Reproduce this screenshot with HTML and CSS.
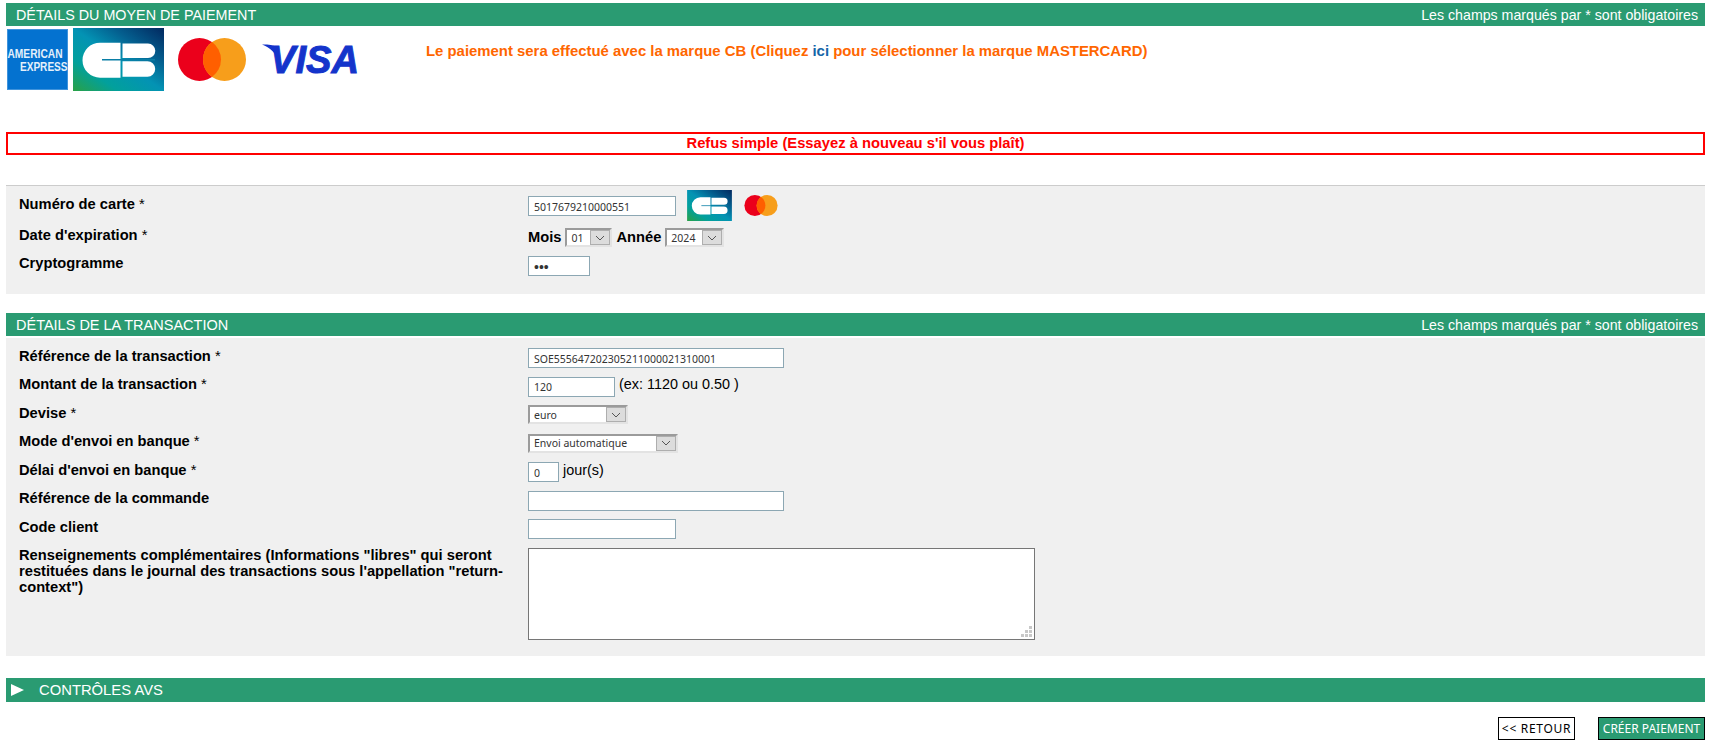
FILE: index.html
```html
<!DOCTYPE html>
<html lang="fr">
<head>
<meta charset="utf-8">
<title>Détails du moyen de paiement</title>
<link rel="stylesheet" href="styles.css">
</head>
<body>
<form class="page">
  <div class="bar"><span>DÉTAILS DU MOYEN DE PAIEMENT</span><span class="bar-note">Les champs marqués par * sont obligatoires</span></div>
  <div class="brands">
    <svg class="logo-amex" viewBox="0 0 61 61" aria-label="American Express">
      <rect x=".5" y=".5" width="60" height="60" fill="#0472d0" stroke="#3f93dc"/>
      <text x=".5" y="29.3" class="amex-text" textLength="55" lengthAdjust="spacingAndGlyphs">AMERICAN</text>
      <text x="13" y="41.700" class="amex-text" textLength="47.500" lengthAdjust="spacingAndGlyphs">EXPRESS</text>
    </svg>
    <svg class="logo-cb" viewBox="0 0 91 63" aria-label="CB">
      <defs>
        <linearGradient id="cbg" x1="1" y1="0" x2="0" y2="1">
          <stop offset="0" stop-color="#02285f"/>
          <stop offset="0.28" stop-color="#045f8f"/>
          <stop offset="0.5" stop-color="#0393b4"/>
          <stop offset="0.75" stop-color="#02a09c"/>
          <stop offset="1" stop-color="#2aa145"/>
        </linearGradient>
      </defs>
      <rect width="91" height="63" fill="url(#cbg)"/>
      <path d="M47.500 14.700H27a17.500 17.500 0 0 0 0 35H47.500Z" fill="#fff"/>
      <path d="M49.500 15.500H75a7.300 7.300 0 0 1 0 14.600H49.500ZM49.500 33.300H74.500a7.700 7.700 0 0 1 0 15.400H49.500Z" fill="#fff"/>
      <path d="M29 31.800H82" stroke="#0a7ea6" stroke-width="1.6"/>
    </svg>
    <svg class="logo-mc" viewBox="0 0 68 43" aria-label="Mastercard">
      <circle cx="21.5" cy="21.5" r="21.5" fill="#eb001b"/>
      <circle cx="46.5" cy="21.5" r="21.5" fill="#f79e1b"/>
      <path d="M34 4a21.5 21.5 0 0 1 0 35a21.5 21.5 0 0 1 0-35Z" fill="#ff5f00"/>
    </svg>
    <svg class="logo-visa" viewBox="0 0 96 31" aria-label="Visa">
      <path class="visa-tab" d="M0 .5C6 .2 13 .5 14.500 4.500L17 18C14 9 8 3.500 0 .5Z"/>
      <text x="8" y="28.700" class="visa-text" textLength="89" lengthAdjust="spacingAndGlyphs">VISA</text>
    </svg>
    <p class="brand-note">Le paiement sera effectué avec la marque CB (Cliquez <a href="#">ici</a> pour sélectionner la marque MASTERCARD)</p>
  </div>
  <div class="error">Refus simple (Essayez à nouveau s'il vous plaît)</div>

  <section class="panel panel-card">
    <div class="row row-card">
      <label class="lbl">Numéro de carte <i>*</i></label>
      <div class="ctl">
        <input class="field w-card" type="text" value="5017679210000551">
        <svg class="mini-cb" viewBox="0 0 91 63" aria-label="CB">
          <rect width="91" height="63" fill="url(#cbg)"/>
          <path d="M47.500 14.700H27a17.500 17.500 0 0 0 0 35H47.500Z" fill="#fff"/>
          <path d="M49.500 15.500H75a7.300 7.300 0 0 1 0 14.600H49.500ZM49.500 33.300H74.500a7.700 7.700 0 0 1 0 15.400H49.500Z" fill="#fff"/>
          <path d="M29 31.800H82" stroke="#0a7ea6" stroke-width="1.6"/>
        </svg>
        <svg class="mini-mc" viewBox="0 0 68 43" aria-label="Mastercard">
          <circle cx="21.5" cy="21.500" r="21.5" fill="#eb001b"/>
          <circle cx="46.5" cy="21.500" r="21.5" fill="#f79e1b"/>
          <path d="M34 4a21.5 21.5 0 0 1 0 35a21.5 21.5 0 0 1 0-35Z" fill="#ff5f00"/>
        </svg>
      </div>
    </div>
    <div class="row row-exp">
      <label class="lbl">Date d'expiration <i>*</i></label>
      <div class="ctl ctl-exp">
        <b class="mini-label">Mois</b>
        <span class="sel sel-gap w-month"><select><option>01</option></select><span class="arrow"><svg viewBox="0 0 10 6"><path d="M1 1l4 4 4-4"/></svg></span></span>
        <b class="mini-label">Année</b>
        <span class="sel sel-gap w-year"><select><option>2024</option></select><span class="arrow"><svg viewBox="0 0 10 6"><path d="M1 1l4 4 4-4"/></svg></span></span>
      </div>
    </div>
    <div class="row row-crypt">
      <label class="lbl">Cryptogramme</label>
      <div class="ctl"><input class="field field-pass w-crypt" type="password" value="123"></div>
    </div>
  </section>

  <div class="bar bar-second"><span class="bar-tx">DÉTAILS DE LA TRANSACTION</span><span class="bar-note">Les champs marqués par * sont obligatoires</span></div>

  <section class="panel panel-tx">
    <div class="row"><label class="lbl">Référence de la transaction <i>*</i></label><div class="ctl"><input class="field w-long" type="text" value="SOE555647202305211000021310001"></div></div>
    <div class="row"><label class="lbl">Montant de la transaction <i>*</i></label><div class="ctl"><input class="field w-amount" type="text" value="120"><span class="hint">(ex: 1120 ou 0.50 )</span></div></div>
    <div class="row"><label class="lbl">Devise <i>*</i></label><div class="ctl"><span class="sel w-currency"><select><option>euro</option></select><span class="arrow"><svg viewBox="0 0 10 6"><path d="M1 1l4 4 4-4"/></svg></span></span></div></div>
    <div class="row"><label class="lbl">Mode d'envoi en banque <i>*</i></label><div class="ctl"><span class="sel w-mode"><select><option>Envoi automatique</option></select><span class="arrow"><svg viewBox="0 0 10 6"><path d="M1 1l4 4 4-4"/></svg></span></span></div></div>
    <div class="row"><label class="lbl">Délai d'envoi en banque <i>*</i></label><div class="ctl"><input class="field w-delay" type="text" value="0"><span class="hint hint-days">jour(s)</span></div></div>
    <div class="row"><label class="lbl">Référence de la commande</label><div class="ctl"><input class="field w-long" type="text"></div></div>
    <div class="row"><label class="lbl">Code client</label><div class="ctl"><input class="field w-card" type="text"></div></div>
    <div class="row row-area">
      <label class="lbl lbl-area">Renseignements complémentaires (Informations "libres" qui seront restituées dans le journal des transactions sous l'appellation "return-context")</label>
      <div class="ctl area-wrap">
        <textarea class="area"></textarea>
        <svg class="grip" viewBox="0 0 11 11"><path d="M8 0h3v3H8ZM4 4h3v3H4ZM8 4h3v3H8ZM0 8h3v3H0ZM4 8h3v3H4ZM8 8h3v3H8Z"/></svg>
      </div>
    </div>
  </section>

  <div class="bar bar-third"><span class="bar-title"><svg class="tri" viewBox="0 0 13 12"><path d="M0 0l13 6L0 12Z"/></svg>CONTRÔLES AVS</span></div>

  <div class="actions">
    <button class="btn btn-back" type="button">&lt;&lt; RETOUR</button>
    <button class="btn btn-go" type="button">CRÉER PAIEMENT</button>
  </div>
</form>
</body>
</html>
```
FILE: styles.css
```css
* { box-sizing: border-box; }
html, body { margin: 0; padding: 0; background: #fff; }
body { font-family: "Liberation Sans", Arial, sans-serif; color: #000; }
.page { padding: 3px 6px 0; display: block; }

.bar {
  display: flex; justify-content: space-between; align-items: center;
  height: 23px; padding: 0 7px 0 10px;
  background: #2a9b72; color: #fff;
  font-size: 14.35px;
}
.bar-tx { font-size: 14.5px; }
.bar-note { font-size: 14.2px; }
.bar-second { margin-top: 19px; }
.bar-third { margin-top: 22px; height: 24px; padding-left: 5px; font-size: 14.8px; }
.bar-title { display: flex; align-items: center; }
.tri { width: 13px; height: 12px; margin-right: 15px; fill: #fff; }

.brands { display: flex; align-items: flex-start; height: 106px; }
.logo-amex { width: 61px; height: 61px; margin: 3px 5px 0 1px; overflow: visible; }
.amex-text { font: bold 12.5px "Liberation Sans", Arial, sans-serif; fill: #e4f0fb; }
.logo-cb { width: 91px; height: 63px; margin: 2px 14px 0 0; }
.logo-mc { width: 68px; height: 43px; margin: 12px 16px 0 0; }
.logo-visa { width: 96px; height: 31px; margin: 18px 0 0; overflow: visible; }
.visa-text { font: italic bold 39px "Liberation Sans", Arial, sans-serif; fill: #1434cb; stroke: #1434cb; stroke-width: 1; }
.visa-tab { fill: #1434cb; }
.brand-note { margin: 17px 0 0 68px; font-size: 14.9px; font-weight: bold; color: #ff6600; line-height: 16px; }
.brand-note a { color: #1565a8; text-decoration: none; }

.error {
  height: 23px; border: 2px solid #f00; color: #f00;
  text-align: center; font-size: 14.76px; font-weight: bold; line-height: 19px;
}

.panel { background: #f0f0f0; }
.panel-card { margin-top: 30px; height: 109px; border-top: 1px solid #ccc; padding-top: 10px; }
.panel-tx { margin-top: 2px; height: 318px; padding-top: 10px; }

.row { display: grid; grid-template-columns: 522px 1fr; height: 28.5px; }
.row-card { height: 32px; }
.row-exp { height: 28px; }
.row-area { height: auto; }
.lbl { padding: 0 0 0 13px; font-size: 14.7px; font-weight: bold; line-height: 16px; margin-top: -.3px; }
.lbl i { font-style: normal; font-weight: normal; }
.lbl-area { margin-top: -1px; }
.row-exp .lbl { margin-top: -1px; }
.row-crypt .lbl { margin-top: -1px; }
.ctl { display: flex; align-items: flex-start; }

.field {
  height: 20px; border: 1px solid #8ca7b3; background: #fff; color: #333;
  padding: 1px 5px 0; font: 10.5px "Noto Sans", Tahoma, sans-serif; border-radius: 0; outline: 0;
}
.field-pass { font: 14px "Liberation Sans", Arial, sans-serif; color: #333; }
.w-card { width: 148px; }
.w-long { width: 256px; }
.w-amount { width: 87px; }
.w-delay { width: 31px; }
.w-crypt { width: 62px; }
.mini-cb { width: 45px; height: 31px; margin: -6px 12px 0 11px; }
.mini-mc { width: 34px; height: 21px; margin-top: -1px; }
.hint { margin-left: 4px; font-size: 14.4px; line-height: 16px; margin-top: -.2px; }
.hint-days { margin-top: 0; }
.ctl-exp { align-items: center; height: 19px; }
.mini-label { font-size: 14.7px; margin-top: -2px; }
.sel {
  display: inline-flex; height: 19px; background: #e3e3e3;
  border-top: 2px solid #9b9b9b; border-left: 2px solid #9b9b9b;
  border-right: 2px solid #e3e3e3; border-bottom: 2px solid #e3e3e3;
}
.sel-gap { margin: 0 4px 0 4px; }
.sel select {
  appearance: none; -webkit-appearance: none; flex: 1; min-width: 0;
  border: 0; background: #fff; color: #333; padding: 0 0 0 4px; margin: 0;
  font: 10.5px "Noto Sans", Tahoma, sans-serif; border-radius: 0; outline: 0;
}
.arrow {
  width: 20px; display: flex; align-items: center; justify-content: center;
  background: #dcdcdc; border: 1px solid #aeaeae;
}
.arrow svg { width: 10px; height: 6px; fill: none; stroke: #555; stroke-width: 1; }
.w-month { width: 47px; }
.w-year { width: 59px; }
.w-currency { width: 100px; }
.w-mode { width: 150px; }

.area-wrap { position: relative; width: 507px; }
.area {
  display: block; width: 507px; height: 92px; border: 1px solid #767676; background: #fff;
  resize: none; border-radius: 0; outline: 0;
}
.grip { position: absolute; right: 3px; bottom: 3px; width: 11px; height: 11px; fill: #c8c8c8; }

.actions { display: flex; justify-content: flex-end; gap: 23px; margin-top: 15px; }
.btn {
  height: 23px; border: 1px solid #000; border-radius: 0; padding: 0;
  font: 12px "Noto Sans", Tahoma, sans-serif;
}
.btn-back { width: 77px; background: #fff; color: #000; letter-spacing: .7px; }
.btn-go { width: 107px; background: #2a9b72; color: #fff; }
```
